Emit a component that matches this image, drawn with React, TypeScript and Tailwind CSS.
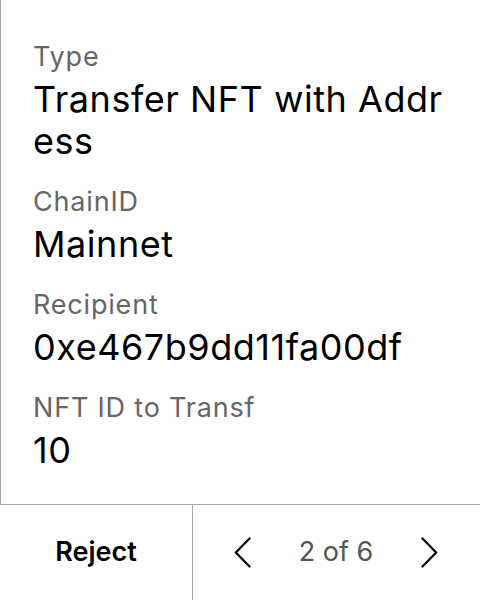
const fields = [
  { label: "Type", value: "Transfer NFT with Address" },
  { label: "ChainID", value: "Mainnet" },
  { label: "Recipient", value: "0xe467b9dd11fa00df" },
  { label: "NFT ID to Transf", value: "10" },
];

function Chevron({ dir }: { dir: "left" | "right" }) {
  return (
    <svg width="17" height="31" viewBox="0 0 17 31" fill="none" className="text-black">
      <path
        d={dir === "left" ? "M15.5 1.5 L1.8 15.5 L15.5 29.5" : "M1.5 1.5 L15.2 15.5 L1.5 29.5"}
        stroke="currentColor"
        strokeWidth="2.3"
        strokeLinecap="round"
        strokeLinejoin="round"
      />
    </svg>
  );
}

export default function App() {
  return (
    <div className="h-[600px] w-[480px] flex flex-col bg-white font-['Inter',sans-serif]">
      {/* Review fields */}
      <div className="flex-1 border-l border-[#a8a8a8] pl-[32px] pr-[33px] pt-[41px] flex flex-col gap-[24px]">
        {fields.map((f) => (
          <div key={f.label} className="flex flex-col gap-[5px]">
            <span className="text-[27px] leading-[32px] tracking-[0.03em] text-[#666666] whitespace-nowrap overflow-hidden">
              {f.label}
            </span>
            <span className="text-[36px] leading-[42px] tracking-[0.015em] text-black break-all">
              {f.value}
            </span>
          </div>
        ))}
      </div>

      {/* Footer actions */}
      <div className="h-[96px] flex border-t border-[#a8a8a8]">
        <button className="w-[193px] border-r border-[#a8a8a8] flex items-center justify-center text-[27px] font-semibold text-black">
          Reject
        </button>
        <div className="flex-1 flex items-center justify-between pl-[41px] pr-[42px]">
          <Chevron dir="left" />
          <span className="text-[27px] text-[#555555]">2 of 6</span>
          <Chevron dir="right" />
        </div>
      </div>
    </div>
  );
}
